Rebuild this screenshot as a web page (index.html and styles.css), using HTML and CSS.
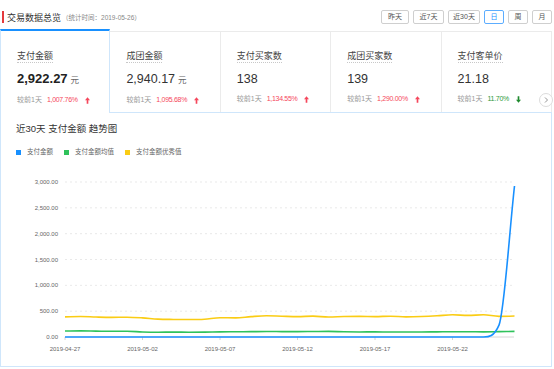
FILE: index.html
```html
<!DOCTYPE html>
<html lang="zh-CN">
  <head>
    <meta charset="UTF-8" />
    <meta name="viewport" content="width=device-width, initial-scale=1.0" />
    <title>交易数据总览</title>
    <link rel="stylesheet" href="styles.css">
  </head>
  <body>
    <div class="page">
      <!-- 标题栏 -->
      <div class="top-bar">
        <div class="page-title">
          <span class="title-mark"></span>交易数据总览<span class="title-sub">（统计时间：2019-05-26）</span>
        </div>
        <div class="range-btns">
          <button class="range-btn">昨天</button>
          <button class="range-btn mid">近7天</button>
          <button class="range-btn wide">近30天</button>
          <button class="range-btn single active">日</button>
          <button class="range-btn single">周</button>
          <button class="range-btn single">月</button>
        </div>
      </div>

      <!-- 指标卡片 -->
      <div class="stat-row">
        <div class="stat-card active">
          <div class="stat-label">支付金额</div>
          <div class="stat-value strong">2,922.27<span class="unit">元</span></div>
          <div class="stat-compare">较前1天<span class="rate up">1,007.76%</span>
            <svg class="trend" viewBox="0 0 6 8"><path d="M3 0 L6 3.6 H4 V8 H2 V3.6 H0 Z" fill="#f5475c"/></svg>
          </div>
        </div>
        <div class="stat-card">
          <div class="stat-label">成团金额</div>
          <div class="stat-value">2,940.17<span class="unit">元</span></div>
          <div class="stat-compare">较前1天<span class="rate up">1,095.68%</span>
            <svg class="trend" viewBox="0 0 6 8"><path d="M3 0 L6 3.6 H4 V8 H2 V3.6 H0 Z" fill="#f5475c"/></svg>
          </div>
        </div>
        <div class="stat-card">
          <div class="stat-label">支付买家数</div>
          <div class="stat-value">138</div>
          <div class="stat-compare">较前1天<span class="rate up">1,134.55%</span>
            <svg class="trend" viewBox="0 0 6 8"><path d="M3 0 L6 3.6 H4 V8 H2 V3.6 H0 Z" fill="#f5475c"/></svg>
          </div>
        </div>
        <div class="stat-card">
          <div class="stat-label">成团买家数</div>
          <div class="stat-value">139</div>
          <div class="stat-compare">较前1天<span class="rate up">1,290.00%</span>
            <svg class="trend" viewBox="0 0 6 8"><path d="M3 0 L6 3.6 H4 V8 H2 V3.6 H0 Z" fill="#f5475c"/></svg>
          </div>
        </div>
        <div class="stat-card">
          <div class="stat-label">支付客单价</div>
          <div class="stat-value">21.18</div>
          <div class="stat-compare">较前1天<span class="rate down">11.70%</span>
            <svg class="trend" viewBox="0 0 6 8"><path d="M3 8 L6 4.4 H4 V0 H2 V4.4 H0 Z" fill="#1f8a2e"/></svg>
          </div>
        </div>
        <span class="next-btn">
          <svg viewBox="0 0 8 8"><path d="M3 1.5 L5.5 4 L3 6.5" fill="none" stroke="#888" stroke-width="0.9"/></svg>
        </span>
      </div>

      <!-- 趋势图 -->
      <div class="chart-panel">
        <div class="chart-title">近30天 支付金额 趋势图</div>
        <div class="legend">
          <span class="legend-item"><i class="dot blue"></i>支付金额</span>
          <span class="legend-item"><i class="dot green"></i>支付金额均值</span>
          <span class="legend-item"><i class="dot yellow"></i>支付金额优秀值</span>
        </div>
        <svg id="trend-chart" class="chart" width="550" height="200" viewBox="1 165 550 200"></svg>
      </div>
    </div>

    <script>
      // 近30天数据
      var payData = [0,0,0,0,0,0,0,0,0,0,0,0,0,0,0,0,0,0,0,0,0,0,0,0,0,0,0,0,230,2922.27];
      var avgData = [115,118,114,110,111,98,93,94,93,95,100,102,104,106,105,104,106,108,101,98,100,96,97,98,100,102,103,100,104,108];
      var goodData = [390,396,386,380,383,370,346,340,338,344,374,370,394,410,402,395,404,386,397,400,395,402,390,396,410,430,418,430,400,405];
      var dates = ['2019-04-27','2019-05-02','2019-05-07','2019-05-12','2019-05-17','2019-05-22'];

      var svg = document.getElementById('trend-chart');
      var NS = 'http://www.w3.org/2000/svg';

      function xPos(i) { return 65 + i * 15.5; }
      function yPos(v) { return 337 - v * 155 / 3000; }

      function add(tag, attrs, text) {
        var el = document.createElementNS(NS, tag);
        for (var k in attrs) el.setAttribute(k, attrs[k]);
        if (text) el.textContent = text;
        svg.appendChild(el);
        return el;
      }

      // 单调三次曲线（平滑折线）
      function smoothPath(pts) {
        var n = pts.length, m = [], t = [];
        for (var k = 0; k < n - 1; k++) {
          m.push((pts[k + 1][1] - pts[k][1]) / (pts[k + 1][0] - pts[k][0]));
        }
        t[0] = m[0];
        t[n - 1] = m[n - 2];
        for (var k = 1; k < n - 1; k++) {
          t[k] = m[k - 1] * m[k] <= 0 ? 0 : (m[k - 1] + m[k]) / 2;
        }
        for (var k = 0; k < n - 1; k++) {
          if (m[k] === 0) { t[k] = 0; t[k + 1] = 0; continue; }
          var a = t[k] / m[k], b = t[k + 1] / m[k], s = a * a + b * b;
          if (s > 9) {
            var tau = 3 / Math.sqrt(s);
            t[k] = tau * a * m[k];
            t[k + 1] = tau * b * m[k];
          }
        }
        var d = 'M' + pts[0][0] + ',' + pts[0][1];
        for (var k = 0; k < n - 1; k++) {
          var x0 = pts[k][0], y0 = pts[k][1], x1 = pts[k + 1][0], y1 = pts[k + 1][1], h = x1 - x0;
          d += ' C' + (x0 + h / 3) + ',' + (y0 + t[k] * h / 3) + ' ' + (x1 - h / 3) + ',' + (y1 - t[k + 1] * h / 3) + ' ' + x1 + ',' + y1;
        }
        return d;
      }

      // 网格线和Y轴
      for (var v = 500; v <= 3000; v += 500) {
        add('line', { x1: 65, x2: 514, y1: yPos(v), y2: yPos(v), stroke: '#e3e3e3', 'stroke-width': 0.8, 'stroke-dasharray': '2 3' });
      }
      for (var v = 0; v <= 3000; v += 500) {
        var label = v.toLocaleString('en-US', { minimumFractionDigits: 2 });
        add('text', { x: 58, y: yPos(v) + 2, 'text-anchor': 'end', class: 'axis-text' }, label);
      }
      add('line', { x1: 65, x2: 514, y1: 337, y2: 337, stroke: '#cccccc', 'stroke-width': 0.8 });

      // X轴
      for (var i = 0; i < dates.length; i++) {
        var x = xPos(i * 5);
        add('line', { x1: x, x2: x, y1: 337, y2: 340, stroke: '#cccccc', 'stroke-width': 0.8 });
        add('text', { x: x, y: 351, 'text-anchor': 'middle', class: 'axis-text' }, dates[i]);
      }

      function drawLine(data, color) {
        var pts = data.map(function (v, i) { return [xPos(i), yPos(v)]; });
        add('path', { d: smoothPath(pts), fill: 'none', stroke: color, 'stroke-width': 1.6, 'stroke-linejoin': 'round' });
      }

      drawLine(goodData, '#facc14');
      drawLine(avgData, '#2fc25b');
      drawLine(payData, '#1890ff');
    </script>
  </body>
</html>
```

FILE: styles.css
```css
* {
  margin: 0;
  padding: 0;
  box-sizing: border-box;
}

body {
  background: #fff;
  font-family: "Liberation Sans", "Noto Sans CJK SC", sans-serif;
  color: #333;
}

.page {
  width: 552px;
}

/* 标题栏 */
.top-bar {
  display: flex;
  align-items: center;
  justify-content: space-between;
  height: 29px;
  padding: 5px 0 0 2px;
}

.page-title {
  display: flex;
  align-items: center;
  font-size: 9px;
  color: #333;
}

.title-mark {
  width: 2px;
  height: 12px;
  background: #e4393c;
  margin-right: 3px;
}

.title-sub {
  font-size: 6.5px;
  color: #888;
  margin-left: 1px;
}

.range-btns {
  display: flex;
  gap: 4px;
}

.range-btn {
  height: 14px;
  padding: 0 4px;
  min-width: 28px;
  border: 1px solid #cfcfcf;
  border-radius: 2px;
  background: #fff;
  color: #555;
  font-family: inherit;
  font-size: 7px;
  line-height: 12px;
}

.range-btn.mid {
  min-width: 31px;
}

.range-btn.wide {
  min-width: 32px;
}

.range-btn.single {
  min-width: 20px;
}

.range-btn.active {
  border-color: #5cadff;
  color: #1890ff;
}

/* 指标卡片 */
.stat-row {
  position: relative;
  display: grid;
  grid-template-columns: repeat(5, 1fr);
  align-items: start;
}

.stat-card {
  height: 81px;
  margin-top: 2px;
  padding: 13px 16px 0;
  border-top: 1px solid #ebebeb;
  border-right: 1px solid #ebebeb;
  background: #fff;
}

.stat-card.active {
  position: relative;
  z-index: 1;
  height: 84px;
  margin-top: 0;
  margin-bottom: -1px;
  padding-top: 14px;
  border-top: 2px solid #1890ff;
  border-left: 1px solid #cfe6fb;
  border-right: 1px solid #cfe6fb;
}

.stat-label {
  display: inline-block;
  font-size: 9px;
  line-height: 12px;
  color: #444;
  border-bottom: 1px dotted #c8c8c8;
}

.stat-value {
  margin-top: 7px;
  font-size: 12.5px;
  line-height: 18px;
  color: #333;
}

.stat-value.strong {
  font-size: 13px;
  font-weight: bold;
  color: #222;
}

.unit {
  font-size: 8.5px;
  font-weight: normal;
  color: #666;
  margin-left: 3px;
}

.stat-compare {
  display: flex;
  align-items: center;
  margin-top: 5px;
  font-size: 7px;
  line-height: 12px;
  color: #999;
}

.rate {
  margin-left: 5px;
  letter-spacing: -0.3px;
}

.rate.up {
  color: #f5475c;
}

.rate.down {
  color: #2e9a3a;
}

.trend {
  width: 5px;
  height: 7px;
  margin-left: 7px;
}

.next-btn {
  position: absolute;
  top: 64px;
  right: -1px;
  z-index: 2;
  display: flex;
  align-items: center;
  justify-content: center;
  width: 14px;
  height: 14px;
  border: 1px solid #dcdcdc;
  border-radius: 50%;
  background: #fff;
}

.next-btn svg {
  width: 8px;
  height: 8px;
}

/* 趋势图 */
.chart-panel {
  border: 1px solid #cfe6fb;
  padding-bottom: 1px;
}

.chart-title {
  padding: 9px 15px 0;
  font-size: 9.5px;
  line-height: 14px;
  color: #333;
}

.legend {
  display: flex;
  gap: 11px;
  margin-top: 10px;
  padding-left: 15px;
  font-size: 6.5px;
  line-height: 12px;
  color: #666;
}

.legend-item {
  display: flex;
  align-items: center;
}

.dot {
  width: 5px;
  height: 5px;
  margin-right: 6px;
}

.dot.blue {
  background: #1890ff;
}

.dot.green {
  background: #2fc25b;
}

.dot.yellow {
  background: #facc14;
}

.chart {
  display: block;
  margin-top: 7px;
}

.axis-text {
  font-family: "Liberation Sans", sans-serif;
  font-size: 6px;
  fill: #666;
}
```
